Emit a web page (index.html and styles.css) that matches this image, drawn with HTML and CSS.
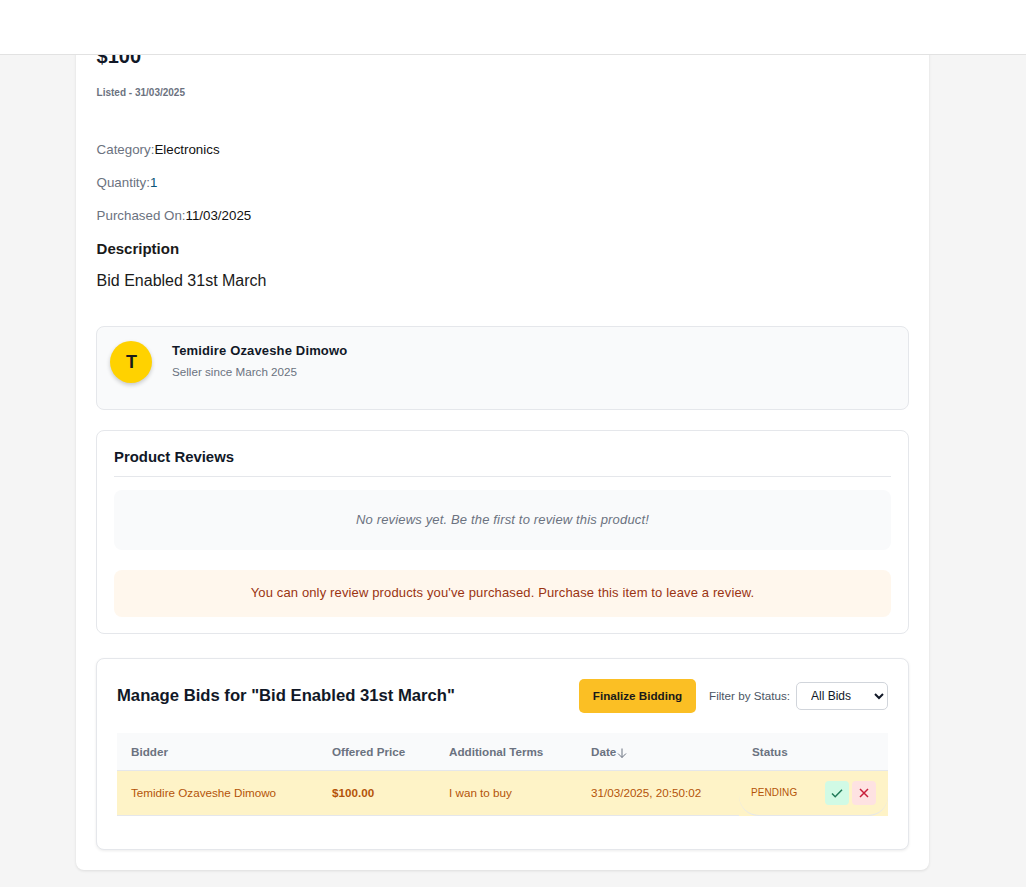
FILE: index.html
```html
<!DOCTYPE html>
<html lang="en">
<head>
    <meta charset="UTF-8">
    <title>Bid Enabled 31st March</title>
    <link rel="stylesheet" href="styles.css">
</head>
<body>

    <header class="topbar"></header>

    <main class="product-card">
        <p class="price">$100</p>
        <p class="listed">Listed - 31/03/2025</p>

        <div class="details">
            <p class="detail"><span class="detail-label">Category:</span>Electronics</p>
            <p class="detail"><span class="detail-label">Quantity:</span><span class="detail-qty">1</span></p>
            <p class="detail"><span class="detail-label">Purchased On:</span>11/03/2025</p>
        </div>

        <h3 class="desc-title">Description</h3>
        <p class="desc-text">Bid Enabled 31st March</p>

        <section class="seller">
            <div class="avatar">T</div>
            <div>
                <div class="seller-name">Temidire Ozaveshe Dimowo</div>
                <div class="seller-since">Seller since March 2025</div>
            </div>
        </section>

        <section class="reviews">
            <h3 class="reviews-title">Product Reviews</h3>
            <div class="no-reviews">No reviews yet. Be the first to review this product!</div>
            <div class="review-notice">You can only review products you've purchased. Purchase this item to leave a review.</div>
        </section>

        <section class="bids">
            <div class="bids-head">
                <h2 class="bids-title">Manage Bids for "Bid Enabled 31st March"</h2>
                <div class="bids-controls">
                    <button class="finalize" type="button">Finalize Bidding</button>
                    <label class="filter-label" for="status">Filter by Status:</label>
                    <select class="filter" id="status">
                        <option>All Bids</option>
                    </select>
                </div>
            </div>

            <table class="bids-table">
                <thead>
                    <tr>
                        <th class="col-bidder">Bidder</th>
                        <th class="col-price">Offered Price</th>
                        <th class="col-terms">Additional Terms</th>
                        <th class="col-date">Date<svg class="sort-icon" viewBox="0 0 12 12" width="12" height="12"><path d="M6 1.5v9M2 6.5l4 4 4-4" fill="none" stroke="#6b7280" stroke-width="1"/></svg></th>
                        <th class="col-status">Status</th>
                    </tr>
                </thead>
                <tbody>
                    <tr class="row-pending">
                        <td>Temidire Ozaveshe Dimowo</td>
                        <td class="bid-amount">$100.00</td>
                        <td>I wan to buy</td>
                        <td>31/03/2025, 20:50:02</td>
                        <td class="status-cell">
                            <div class="status-wrap">
                                <span class="status">PENDING</span>
                                <div class="actions">
                                    <button class="action accept" type="button" aria-label="Accept"><svg viewBox="0 0 14 14" width="14" height="14"><path d="M2 7.5l3.2 3.2L12 3.8" fill="none" stroke="#1f7a57" stroke-width="1.5"/></svg></button>
                                    <button class="action reject" type="button" aria-label="Reject"><svg viewBox="0 0 14 14" width="14" height="14"><path d="M3 3l8 8M11 3l-8 8" fill="none" stroke="#c81e3a" stroke-width="1.5"/></svg></button>
                                </div>
                            </div>
                        </td>
                    </tr>
                </tbody>
            </table>
        </section>
    </main>

</body>
</html>
```

FILE: styles.css
```css
* {
    box-sizing: border-box;
}

html, body {
    height: 100%;
    overflow: hidden;
}

body {
    margin: 0;
    font-family: "Liberation Sans", Arial, sans-serif;
    background-color: #f5f5f5;
    color: #111827;
}

p, h2, h3 {
    margin: 0;
}

.topbar {
    position: relative;
    z-index: 10;
    height: 55px;
    background: #fff;
    border-bottom: 1px solid #e2e2e2;
}

.product-card {
    width: 853px;
    height: 835px;
    margin: -20px 0 0 76px;
    padding: 10px 20px 0;
    background: #fff;
    border-radius: 8px;
    box-shadow: 0 1px 3px rgba(0,0,0,0.1);
}

.price {
    padding-left: 0.6px;
    font-size: 20px;
    font-weight: bold;
    line-height: 23px;
    color: #111827;
}

.listed {
    margin-top: 19px;
    padding-left: 0.6px;
    font-size: 10px;
    font-weight: bold;
    line-height: 12px;
    color: #6b7280;
}

.details {
    margin-top: 43px;
}

.detail {
    font-size: 13.33px;
    line-height: 16px;
    margin-bottom: 17px;
    padding-left: 0.6px;
    color: #111;
}

.detail-label {
    color: #6b7280;
}

.detail-qty {
    color: #0b5578;
}

.desc-title {
    margin-top: -1px;
    padding-left: 0.6px;
    font-size: 15px;
    line-height: 18px;
    color: #1a1a1a;
}

.desc-text {
    margin-top: 14px;
    padding-left: 0.6px;
    font-size: 16px;
    line-height: 18px;
    color: #1a1a1a;
}

.seller {
    display: flex;
    gap: 20px;
    height: 84px;
    margin-top: 36px;
    padding: 14px 13px;
    background: #f9fafb;
    border: 1px solid #e5e7eb;
    border-radius: 8px;
}

.avatar {
    display: flex;
    align-items: center;
    justify-content: center;
    width: 42px;
    height: 42px;
    padding-left: 1px;
    border-radius: 50%;
    background: #ffd200;
    box-shadow: 0 2px 4px rgba(0,0,0,0.2);
    font-size: 18px;
    font-weight: bold;
    color: #1a1a1a;
}

.seller-name {
    margin-top: 2px;
    font-size: 13px;
    font-weight: bold;
    line-height: 15px;
    letter-spacing: 0.15px;
    color: #111827;
}

.seller-since {
    margin-top: 6px;
    font-size: 11.67px;
    line-height: 15px;
    color: #6b7280;
}

.reviews {
    height: 204px;
    margin-top: 20px;
    padding: 17px 17px 0;
    border: 1px solid #e5e7eb;
    border-radius: 8px;
    background: #fff;
}

.reviews-title {
    height: 29px;
    font-size: 14.9px;
    line-height: 18px;
    border-bottom: 1px solid #e5e7eb;
    color: #111827;
}

.no-reviews {
    display: flex;
    align-items: center;
    justify-content: center;
    height: 60px;
    margin-top: 13px;
    padding-bottom: 2px;
    background: #f9fafb;
    border-radius: 8px;
    font-size: 13px;
    font-style: italic;
    letter-spacing: 0.16px;
    color: #6b7280;
}

.review-notice {
    display: flex;
    align-items: center;
    justify-content: center;
    height: 47px;
    margin-top: 20px;
    padding-bottom: 2px;
    background: #fff7ed;
    border-radius: 8px;
    font-size: 13px;
    letter-spacing: 0.14px;
    color: #9a3412;
}

.bids {
    height: 192px;
    margin-top: 24px;
    padding: 20px 20px 0;
    border: 1px solid #e5e7eb;
    border-radius: 8px;
    background: #fff;
    box-shadow: 0 1px 3px rgba(0,0,0,0.08);
}

.bids-head {
    display: flex;
    align-items: center;
    justify-content: space-between;
    height: 34px;
}

.bids-title {
    font-size: 16.67px;
    line-height: 20px;
    color: #111827;
}

.bids-controls {
    display: flex;
    align-items: center;
}

.finalize {
    width: 117px;
    height: 34px;
    margin-right: 13px;
    padding: 0 0 2px;
    border: none;
    border-radius: 5px;
    background: #fbbf24;
    font-family: inherit;
    font-size: 11.67px;
    font-weight: bold;
    color: #1a1a1a;
    cursor: pointer;
}

.filter-label {
    margin-right: 6px;
    padding-bottom: 2px;
    font-size: 11.67px;
    color: #4b5563;
}

.filter {
    width: 92px;
    height: 28px;
    padding: 0 0 0 10px;
    border: 1px solid #d1d5db;
    border-radius: 5px;
    background: #fff;
    font-family: inherit;
    font-size: 12px;
    color: #111827;
}

.bids-table {
    width: 771px;
    margin-top: 20px;
    border-collapse: separate;
    border-spacing: 0;
    table-layout: fixed;
    font-size: 11.67px;
}

.col-bidder {
    width: 201px;
}

.col-price {
    width: 117px;
}

.col-terms {
    width: 142px;
}

.col-date {
    width: 162px;
}

.bids-table th {
    height: 38px;
    padding: 0 14px;
    text-align: left;
    font-weight: bold;
    color: #6b7280;
    background: #f9fafb;
    border-bottom: 1px solid #e5e7eb;
}

.bids-table .col-status {
    padding-left: 13px;
}

.sort-icon {
    vertical-align: -3px;
}

.bids-table td {
    height: 45px;
    padding: 0 14px 2px;
    color: #b45309;
    border-bottom: 1px solid #e5e7eb;
}

.row-pending {
    background: #fef3c7;
}

.bid-amount {
    font-weight: bold;
}

.bids-table .status-cell {
    padding: 0;
    background: #fef3c7;
    border-bottom: none;
}

.status-wrap {
    display: flex;
    align-items: center;
    justify-content: space-between;
    height: 45px;
    padding: 0 12px;
    border-bottom: 1px solid #e5e7eb;
    border-radius: 0 0 20px 20px;
}

.status {
    padding-bottom: 2px;
    font-size: 10px;
    letter-spacing: 0.1px;
}

.actions {
    display: flex;
    gap: 3px;
}

.action {
    display: flex;
    align-items: center;
    justify-content: center;
    width: 24px;
    height: 24px;
    padding: 0;
    border: none;
    border-radius: 4px;
    cursor: pointer;
}

.accept {
    background: #d1fae5;
}

.reject {
    background: #fee2e2;
}
```
